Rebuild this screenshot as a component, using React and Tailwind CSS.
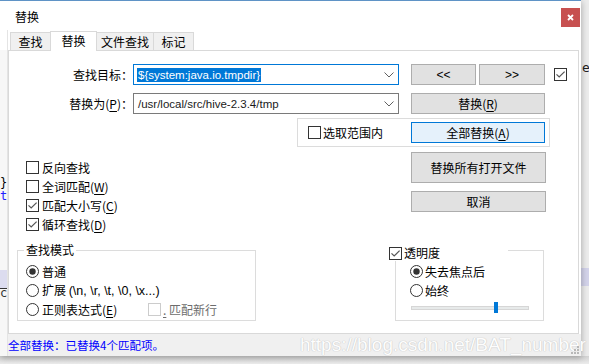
import React from "react";

function Check({ checked = false, disabled = false }) {
  return (
    <svg width="13" height="13" viewBox="0 0 13 13" className="shrink-0 block">
      <rect x="0.5" y="0.5" width="12" height="12" fill="#ffffff" stroke={disabled ? "#cccccc" : "#333333"} />
      {checked && <path d="M2.5 6.3 L5.2 9 L10.6 3.6" fill="none" stroke="#555555" strokeWidth="1.2" />}
    </svg>
  );
}

function Radio({ checked = false }) {
  return (
    <svg width="13" height="13" viewBox="0 0 13 13" className="shrink-0 block">
      <circle cx="6.5" cy="6.5" r="6" fill="#ffffff" stroke="#333333" />
      {checked && <circle cx="6.5" cy="6.5" r="3.2" fill="#333333" />}
    </svg>
  );
}

function Chevron() {
  return (
    <svg width="10" height="6" viewBox="0 0 10 6" className="block">
      <path d="M0.5 0.5 L5 5 L9.5 0.5" fill="none" stroke="#606060" strokeWidth="1" />
    </svg>
  );
}

const U = ({ children }) => <span className="underline underline-offset-2">{children}</span>;

export default function App() {
  return (
    <div className="w-[589px] h-[364px] overflow-hidden bg-[#e8e8e8] text-[12px] text-black font-['Noto_Sans_CJK_SC','Noto_Sans',sans-serif]">
      <div className="flex">
        {/* dialog */}
        <div className="w-[581px] h-[356px] flex flex-col bg-white border-t border-[#5f93c6] relative z-10 shadow-[1px_2px_6px_rgba(0,0,0,0.25)]">
          {/* title bar */}
          <div className="h-[29px] flex items-start shrink-0">
            <span className="ml-[15px] mt-[8px] leading-[16px]">替换</span>
            <div className="ml-auto mt-[7px] mr-[1px] w-[19px] h-[19px] bg-[#c75050] flex items-center justify-center">
              <svg width="7" height="7" viewBox="0 0 7 7" className="block">
                <path d="M1 1 L6 6 M6 1 L1 6" stroke="#ffffff" strokeWidth="1.8" />
              </svg>
            </div>
          </div>
          {/* body */}
          <div className="flex flex-1">
            {/* left strip showing editor behind */}
            <div className="w-[8px] h-[326px] bg-[#f7f7f7] border-r border-[#e4e4e4] flex flex-col overflow-hidden font-['DejaVu_Sans_Mono',monospace] text-[12px] leading-[10px]">
              <div className="h-[20px] bg-white shrink-0"></div>
              <div className="mt-[128px] text-black">{"}"}</div>
              <div className="mt-[3px] text-[#2020ff]">t</div>
              <div className="mt-[69px] h-[19px] bg-[#dcdcef] border-b border-[#333333] shrink-0"></div>
              <div className="text-[#333333] -mt-[1px]">c</div>
            </div>
            {/* main */}
            <div className="w-[573px] flex flex-col">
              {/* tabs */}
              <div className="h-[20px] flex items-end pl-[2px] shrink-0">
                <div className="h-[18px] w-[41px] border border-b-0 border-[#d9d9d9] bg-[#f0f0f0] flex items-center justify-center leading-[14px]">查找</div>
                <div className="h-[20px] w-[47px] -ml-px -mb-px border border-b-0 border-[#d9d9d9] bg-white relative z-10 flex items-start pt-[2px] justify-center leading-[14px]">替换</div>
                <div className="h-[18px] w-[58px] -ml-px border border-b-0 border-[#d9d9d9] bg-[#f0f0f0] flex items-center justify-center leading-[14px]">文件查找</div>
                <div className="h-[18px] w-[41px] -ml-px border border-b-0 border-[#d9d9d9] bg-[#f0f0f0] flex items-center justify-center leading-[14px]">标记</div>
              </div>
              {/* panel */}
              <div className="h-[284px] w-[571px] border border-[#d9d9d9] bg-white flex flex-col shrink-0">
                {/* Row A */}
                <div className="mt-[13px] h-[21px] flex items-center">
                  <div className="w-[124px] text-right leading-[16px]">查找目标：</div>
                  <div className="w-[266px] h-[21px] border border-[#0078d7] bg-white flex items-center pl-[3px] pr-[4px]">
                    <span className="bg-[#0078d7] text-white leading-[14px] h-[14px] px-px whitespace-nowrap font-['Liberation_Sans',sans-serif] text-[11.5px]">{"${system:java.io.tmpdir}"}</span>
                    <span className="ml-auto"><Chevron /></span>
                  </div>
                  <div className="ml-[12px] w-[65px] h-[21px] border border-[#adadad] bg-[#e1e1e1] flex items-center justify-center font-['Liberation_Sans',sans-serif] leading-[14px]">{"<<"}</div>
                  <div className="ml-[3px] w-[66px] h-[21px] border border-[#adadad] bg-[#e1e1e1] flex items-center justify-center font-['Liberation_Sans',sans-serif] leading-[14px]">{">>"}</div>
                  <div className="ml-[9px]"><Check checked /></div>
                </div>
                {/* Row B */}
                <div className="mt-[8px] h-[21px] flex items-center">
                  <div className="w-[124px] text-right leading-[16px]">替换为(<U>P</U>)：</div>
                  <div className="w-[266px] h-[21px] border border-[#7a7a7a] bg-white flex items-center pl-[4px] pr-[4px]">
                    <span className="leading-[14px] whitespace-nowrap text-[#1a1a1a] font-['Liberation_Sans',sans-serif] text-[11.5px]">/usr/local/src/hive-2.3.4/tmp</span>
                    <span className="ml-auto"><Chevron /></span>
                  </div>
                  <div className="ml-[12px] w-[134px] h-[21px] border border-[#adadad] bg-[#e1e1e1] flex items-center justify-center leading-[14px]">替换(<U>R</U>)</div>
                </div>
                {/* Row C */}
                <div className="mt-[4px] ml-[288px] w-[253px] h-[29px] border border-[#dcdcdc] flex items-center pl-[10px]">
                  <div className="w-[103px] flex items-center">
                    <Check />
                    <span className="ml-[2px] leading-[16px]">选取范围内</span>
                  </div>
                  <div className="w-[134px] h-[21px] border border-[#0078d7] bg-[#e5f1fb] flex items-center justify-center leading-[14px]">全部替换(<U>A</U>)</div>
                </div>
                {/* Row D */}
                <div className="flex">
                  <div className="w-[402px] pl-[17px] mt-[11px] flex flex-col">
                    <div className="h-[19px] flex items-center"><Check /><span className="ml-[3px] leading-[16px]">反向查找</span></div>
                    <div className="h-[19px] flex items-center"><Check /><span className="ml-[3px] leading-[16px]">全词匹配(<U>W</U>)</span></div>
                    <div className="h-[19px] flex items-center"><Check checked /><span className="ml-[3px] leading-[16px]">匹配大小写(<U>C</U>)</span></div>
                    <div className="h-[19px] flex items-center"><Check checked /><span className="ml-[3px] leading-[16px]">循环查找(<U>D</U>)</span></div>
                  </div>
                  <div className="w-[135px] mt-[5px] flex flex-col">
                    <div className="h-[31px] border border-[#adadad] bg-[#e1e1e1] flex items-center justify-center leading-[14px]">替换所有打开文件</div>
                    <div className="mt-[8px] h-[21px] border border-[#adadad] bg-[#e1e1e1] flex items-center justify-center leading-[14px]">取消</div>
                  </div>
                </div>
                {/* Row E */}
                <div className="mt-[16px] flex items-start">
                  <div className="ml-[8px] w-[239px] h-[71px] border border-[#dcdcdc] flex flex-col">
                    <div className="-mt-[9px] ml-[6px] px-[2px] bg-white w-fit leading-[16px] h-[16px]">查找模式</div>
                    <div className="mt-[4px] pl-[8px] flex flex-col">
                      <div className="h-[19px] flex items-center"><Radio checked /><span className="ml-[3px] leading-[16px]">普通</span></div>
                      <div className="h-[19px] flex items-center"><Radio /><span className="ml-[3px] leading-[16px]">扩展 <span className="font-['Liberation_Sans',sans-serif] text-[12.5px]">{"(\\n, \\r, \\t, \\0, \\x...)"}</span></span></div>
                      <div className="h-[19px] flex items-center">
                        <div className="w-[122px] flex items-center"><Radio /><span className="ml-[3px] leading-[16px]">正则表达式(<U>E</U>)</span></div>
                        <Check disabled />
                        <span className="ml-[2px] leading-[16px] text-[#6d6d6d]"><U>.</U> 匹配新行</span>
                      </div>
                    </div>
                  </div>
                  <div className="ml-[139px] w-[149px] h-[71px] border border-[#dcdcdc] flex flex-col">
                    <div className="-mt-[6px] -ml-[7px] w-[119px] h-[16px] bg-white flex items-center">
                      <Check checked />
                      <span className="ml-[2px] leading-[16px]">透明度</span>
                    </div>
                    <div className="mt-[1px] pl-[14px] flex flex-col">
                      <div className="h-[19px] flex items-center"><Radio checked /><span className="ml-[2px] leading-[16px]">失去焦点后</span></div>
                      <div className="h-[19px] flex items-center"><Radio /><span className="ml-[2px] leading-[16px]">始终</span></div>
                    </div>
                    <div className="mt-[6px] ml-[15px] w-[118px] h-[4px] bg-[#e7eaea] border border-[#d6d6d6] relative">
                      <div className="absolute left-[82px] -top-[5px] w-[4px] h-[11px] bg-[#0078d7]"></div>
                    </div>
                  </div>
                </div>
              </div>
              {/* status bar */}
              <div className="h-[22px] bg-[#f0f0f0] relative flex items-center shrink-0">
                <span className="text-[11.5px] text-[#0000ff] leading-[14px] whitespace-nowrap">全部替换：已替换4个匹配项。</span>
                <span className="absolute left-[292px] top-[0px] font-['Liberation_Sans',sans-serif] text-[19px] leading-[21px] text-[#fdfdfd] whitespace-nowrap [text-shadow:0_0_1px_#c4c4c4,0_0_1px_#c4c4c4]">https://blog.csdn.net/BAT_number</span>
                <svg width="9" height="9" viewBox="0 0 9 9" className="absolute right-[1px] bottom-[1px]">
                  <rect x="6" y="0" width="2" height="2" fill="#b8b8b8" />
                  <rect x="3" y="3" width="2" height="2" fill="#b8b8b8" />
                  <rect x="6" y="3" width="2" height="2" fill="#b8b8b8" />
                  <rect x="0" y="6" width="2" height="2" fill="#b8b8b8" />
                  <rect x="3" y="6" width="2" height="2" fill="#b8b8b8" />
                  <rect x="6" y="6" width="2" height="2" fill="#b8b8b8" />
                </svg>
              </div>
            </div>
          </div>
        </div>
        {/* right strip (behind) */}
        <div className="w-[8px] h-[356px] bg-[#ececec] flex flex-col overflow-hidden font-['DejaVu_Sans_Mono',monospace] text-[13px] leading-[10px]">
          <div className="mt-[63px] text-[#222222] pl-[1px]">e</div>
          <div className="mt-[195px] h-[18px] bg-[#d3d3ea] shrink-0"></div>
        </div>
      </div>
      <div className="h-[8px] bg-gradient-to-b from-[#d2d2d2] to-[#ececec]"></div>
    </div>
  );
}
